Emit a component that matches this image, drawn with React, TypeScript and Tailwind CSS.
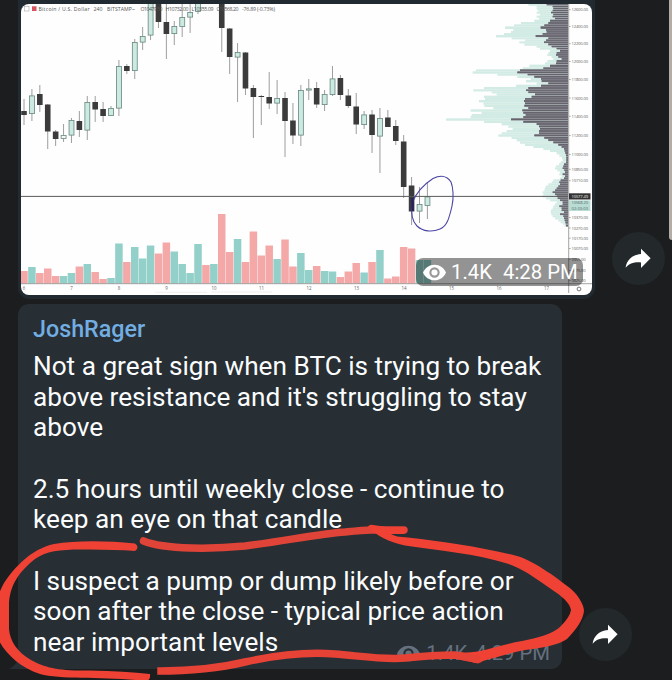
import React from "react";

type Candle = [number, number, number, number, "d" | "g" | "w"];

// high, body top, body bottom, low, kind (dark / green / hollow)
const candles: (Candle | null)[] = [
  [99, 111, 115, 125, "d"], [89, 95.5, 114, 121, "g"], [85, 94, 105, 112, "d"], [104, 104.5, 131.5, 149, "d"],
  [130, 131.5, 139, 146, "d"], [124, 135, 139, 142, "w"], [118, 120, 135.5, 143, "g"], [111, 121, 130, 137, "d"],
  [96, 102, 130.5, 140, "g"], [96, 102, 109.5, 122, "d"], [102, 109, 116, 122, "d"], [106, 108, 116, 116, "g"],
  [60, 66, 108.5, 116, "g"], [64, 66, 71, 74, "d"], [39, 42, 71, 79, "g"], [27, 36, 42.5, 50, "g"],
  [0, 0, 35.5, 40, "g"], [0, 0, 22, 28, "d"], [4, 22, 34, 59, "d"], [21, 26, 34, 45, "g"],
  [4, 17, 27, 37, "g"], [4, 12, 17.5, 33, "g"], [0, 0, 12, 14, "g"], null,
  null, [0, 0, 28, 52, "d"], [28, 28.5, 57, 74, "d"], [43, 52, 57.5, 102, "g"],
  [52, 52.5, 88.5, 95, "d"], [85, 88, 97, 138, "d"], [95, 96, 97, 125, "d"], [72, 97, 103.5, 109, "d"],
  [80, 98, 103.5, 114, "g"], [92, 98, 121, 157, "d"], [103, 120.5, 135.5, 144, "d"], [85, 90, 135.5, 146, "g"],
  [79, 88.5, 90.5, 100, "w"], [82, 88, 104.5, 108, "d"], [90, 94, 105, 111, "g"], [66, 78.5, 95, 96, "g"],
  [75, 78, 95, 100, "d"], [89, 95.5, 106, 108, "d"], [93, 106.5, 124.5, 134, "d"], [111, 114.5, 125, 129, "g"],
  [110, 114.5, 135, 153, "d"], [108, 118, 136.5, 173, "g"], [110, 117.5, 127, 127, "d"], [120, 126, 141, 145, "d"],
  [135, 141.5, 187, 198, "d"], [177, 185.5, 211.5, 225, "d"], [187, 204, 211.5, 223, "g"], [182, 196.5, 206, 219, "g"],
];

const volumes: [number, "r" | "g"][] = [
  [271, "r"], [267, "g"], [273, "r"], [268.5, "r"], [276, "r"], [276, "g"], [273, "g"], [266.5, "r"], [264, "g"],
  [272, "r"], [279, "r"], [278, "g"], [243.5, "g"], [262, "r"], [247, "g"], [258.5, "g"], [245.5, "g"], [253.5, "r"],
  [242.5, "r"], [251.5, "g"], [264, "g"], [273, "g"], [244, "g"], [265, "r"], [264, "g"], [214, "r"], [252, "r"],
  [239, "g"], [262, "r"], [231.5, "r"], [255.5, "r"], [245.5, "r"], [259, "g"], [239.5, "r"], [266.5, "r"],
  [253, "g"], [270, "g"], [266, "r"], [271, "g"], [271.5, "g"], [277, "r"], [271.5, "r"], [263, "r"], [272.5, "g"],
  [262, "r"], [250, "g"], [278.5, "r"], [276.5, "r"], [247, "r"], [248.5, "r"], [260, "g"], [260, "g"],
];

// y, outer left edge, inner left edge; in thirds of a pixel from (440, 0)
const profile: [number, number, number][] = [
  [15, 265, 320], [20, 290, 338], [26, 290, 340], [32, 295, 338], [38, 290, 333], [44, 300, 340], [50, 290, 338],
  [56, 297, 345], [62, 283, 330], [69, 243, 325], [76, 222, 313], [82, 195, 302], [90, 220, 318], [96, 213, 320],
  [102, 192, 308], [108, 168, 287], [115, 215, 325], [121, 255, 318], [127, 238, 312], [133, 253, 325],
  [140, 290, 335], [146, 300, 350], [152, 330, 360], [159, 325, 350], [165, 322, 348], [171, 335, 355],
  [177, 340, 365], [183, 322, 350], [190, 315, 348], [197, 268, 330], [205, 248, 310], [211, 108, 240],
  [217, 98, 232], [224, 172, 263], [230, 232, 283], [237, 272, 303], [243, 258, 305], [250, 290, 325],
  [257, 228, 303], [264, 132, 265], [271, 100, 258], [277, 155, 265], [283, 170, 285], [290, 132, 275],
  [297, 135, 255], [303, 117, 252], [310, 130, 255], [317, 133, 253], [324, 160, 265], [331, 92, 247],
  [338, 125, 250], [345, 95, 257], [351, 92, 250], [358, 18, 213], [365, 132, 250], [372, 185, 290],
  [379, 205, 297], [386, 218, 300], [393, 200, 297], [400, 185, 297], [406, 175, 283], [413, 215, 313],
  [420, 230, 325], [427, 240, 340], [434, 255, 355], [441, 280, 365], [447, 310, 372], [453, 330, 374],
  [459, 350, 376], [466, 358, 378], [473, 366, 379], [480, 368, 379], [487, 362, 378], [493, 357, 372],
  [499, 348, 370], [505, 345, 368], [511, 352, 373], [517, 360, 375], [523, 358, 368], [529, 365, 375],
  [535, 360, 372], [541, 340, 362], [547, 335, 358], [553, 325, 360], [559, 318, 355], [565, 315, 350],
  [571, 313, 345], [577, 308, 338], [583, 310, 345], [589, 307, 350], [595, 318, 353], [601, 330, 360],
  [607, 350, 368], [613, 345, 368], [619, 340, 358], [625, 338, 365], [631, 333, 365], [637, 332, 372],
  [643, 334, 360], [649, 338, 370], [655, 345, 372], [661, 355, 374], [667, 362, 376], [673, 370, 377], [677, 374, 378],
];

const prices: [number, string][] = [
  [9.7, "12600.00"], [26.5, "12400.00"], [43.7, "12200.00"], [61.5, "12000.00"], [79.5, "11800.00"],
  [98, "11600.00"], [116.3, "11400.00"], [135.5, "11200.00"], [154.5, "11000.00"], [169.3, "10850.00"],
  [180.7, "10710.00"], [217.5, "10370.00"], [228, "10270.00"], [238.2, "10170.00"], [248.5, "10070.00"],
  [259.3, "9955.00"], [270.5, "9875.00"], [280.5, "9825.00"],
];

const cx = (i: number) => 24 + i * 7.91;

function Chart() {
  return (
    <svg className="block h-[291px] w-[571px]" viewBox="21 4 571 291" fontFamily="'Open Sans', sans-serif">
      <rect x="21" y="4" width="571" height="291" fill="#fefefe" />
      <g>
        {profile.map(([y, a, b], i) => {
          const h = ((profile[i + 1]?.[0] ?? y + 6) - y) / 3;
          return (
            <g key={y}>
              <rect x={440 + a / 3} y={y / 3 - 1} width={(384 - a) / 3} height={h + 0.05} fill="#d2ebe4" />
              <rect x={440 + b / 3} y={y / 3 - 1} width={(384 - b) / 3} height={h + 0.05} fill="#918f98" />
              <rect x={440 + b / 3} y={y / 3 - 0.8} width={(384 - b) / 3} height={h - 0.7} fill="#65636c" />
            </g>
          );
        })}
      </g>
      {volumes.map(([t, c], i) => {
        const left = Math.max(21, cx(i) - 3.95 + 0.2);
        return (
          <rect key={i} x={left} y={t} width={cx(i) + 3.75 - left} height={283.5 - t} fill={c === "r" ? "#f4a9a8" : "#93d0c9"} />
        );
      })}
      {candles.map((c, i) => {
        if (!c) return null;
        const [hi, top, bot, lo, k] = c;
        return (
          <g key={i}>
            <path d={`M${cx(i)} ${hi}V${lo}`} stroke="#858585" strokeWidth=".8" />
            {k === "d" ? (
              <rect x={cx(i) - 2.8} y={top} width="5.6" height={bot - top} fill="#3b3b3b" />
            ) : (
              <rect x={cx(i) - 2.4} y={top + 0.4} width="4.9" height={bot - top - 0.8} fill={k === "g" ? "#cdeae2" : "#f5f8f7"} stroke="#66867f" strokeWidth=".8" />
            )}
          </g>
        );
      })}
      <path d="M21 196.4H568" stroke="#5a5a5a" strokeWidth="1" />
      <path d="M21 283.7H592" stroke="#8a8a8a" strokeWidth=".8" />
      <path d="M568.7 4V293" stroke="#8a8a8f" strokeWidth=".8" />
      <path
        d="M412 203C417 191 426 183 433 178.5C440 175 447 175.500 451 182C453 187 454 197 452 206C449 219 447 226 440 229C432 232.500 423 231.500 417 226C412 221 411 211 412 203"
        fill="none"
        stroke="#4b46a2"
        strokeWidth="1.1"
      />
      <path d="M412.5 198V211" stroke="#28215f" strokeWidth="2.200" />
      <g fontSize="4.1" fill="#626262">
        {prices.map(([y, label]) => (
          <g key={label}>
            <path d={`M569 ${y}h1.6`} stroke="#777" strokeWidth=".6" />
            <text x="571.5" y={y + 1.5} textLength={label.length > 7 ? 16.5 : 14}>{label}</text>
          </g>
        ))}
      </g>
      <rect x="569" y="200.3" width="21.500" height="10.7" fill="#b9ddd5" />
      <rect x="569" y="193.300" width="21.500" height="6.200" fill="#333" />
      <g fontSize="4.1">
        <text x="571.5" y="198" textLength="16.5" fill="#f2f2f2">10577.49</text>
        <text x="571.5" y="204.100" textLength="16.5" fill="#546b66">10568.20</text>
        <text x="571.5" y="209.800" textLength="16.5" fill="#546b66">02:33:00</text>
      </g>
      <g fontSize="4.4" fill="#666" textAnchor="middle">
        {[6, 7, 8, 9, 10, 11, 12, 13, 14, 15, 16, 17].map((d, i) => (
          <text key={d} x={24 + i * 47.5} y="290.3">{d}</text>
        ))}
      </g>
      <path d="M155 292.300H207M211 292H272" stroke="#e4e4e4" strokeWidth=".6" />
      <circle cx="579" cy="289" r="1.9" fill="none" stroke="#555" strokeWidth=".8" />
      <rect x="24.500" y="6.500" width="4.500" height="4.500" fill="none" stroke="#aaa" strokeWidth=".6" />
      <rect x="32" y="6.300" width="4.500" height="4.700" fill="#d65561" />
      <g fontSize="5.2" fill="#555">
        <text x="38.500" y="10.600" textLength="51">Bitcoin / U.S. Dollar</text>
        <text x="93.500" y="10.600" textLength="9">240</text>
        <text x="107" y="10.600" textLength="28">BITSTAMP~</text>
        <text x="140.500" y="10.600" textLength="22">O10479.50</text>
        <text x="165.500" y="10.600" textLength="23">H10732.00</text>
        <text x="191.500" y="10.600" textLength="22">L10355.09</text>
        <text x="216.500" y="10.600" textLength="22">C10568.20</text>
        <text x="242" y="10.600" textLength="33">-76.89 (-0.73%)</text>
      </g>
    </svg>
  );
}

function Eye({ className, pupil }: { className: string; pupil: string }) {
  return (
    <svg viewBox="0 0 24 17" className={className}>
      <path d="M12 0.300C6.500 .300 2 3.700 0 8.500C2 13.300 6.500 16.700 12 16.700S22 13.300 24 8.500C22 3.700 17.500 .300 12 .300Z" fill="currentColor" />
      <circle cx="12" cy="8.500" r="4.300" fill="none" stroke={pupil} strokeWidth="2.200" />
    </svg>
  );
}

function ForwardButton() {
  return (
    <button aria-label="Forward" className="flex size-[53px] shrink-0 items-center justify-center rounded-full bg-[#23282b] text-white">
      <svg viewBox="0 0 26 21" className="mr-[2px] h-[21px] w-[26px]">
        <path d="M16 .800L25.600 10.200L16 20V14.400C8.500 14 4.200 15.700 .600 19.800C1.700 12.500 6.500 7 16 6.100Z" fill="currentColor" />
      </svg>
    </button>
  );
}

function RedMarker() {
  return (
    <svg className="pointer-events-none absolute inset-0 h-[680px] w-[672px]" viewBox="0 0 672 680" fill="#ef4235">
      <path d="M135 543.500C105 540.500 75 540.500 54 544C31 549 14 568 4 583Q0 590 -3 600V636C2 650 18 667 40 674C62 680 105 676 145 681Q151 681 150 674Q125 671 90 670.500C60 671 45 668 31 660C17 652 10 641 9 629V606C9 585 20 571 35 559C47 550 65 549 90 549.500Q115 549.500 135 551Q140 547 135 543.500Z" />
      <path d="M143.500 541C165 550 215 549 245 546C285 541 318 534 345 532Q365 530 371 530H404" fill="none" stroke="#e04438" strokeWidth="7.500" strokeLinecap="round" strokeLinejoin="round" />
      <path d="M368 527Q369 524 373 525L387 527H404Q409 530 404 534H391Q395 537 408 537.500C445 542 482 547 517 556C535 561 561 581 571 589C580 597 584 606 584 611C583 620 576 630 567 639C559 645 542 648 525 650C510 653 494 658 483 661Q478 665 472 662L457 659L460 652C476 655 498 645 522 641C538 638 552 634 560 627Q570 617 571 610C570 603 562 596 551 589C535 578 523 569 507 563.500C477 554 437 550 405 545.500C388 542 376 535 368 527Z" />
      <path d="M161 671C190 671 216 669 245 662C281 654 310 652 335 654C360 656 385 660 405 658C424 656 442 655 455 655L476 659" fill="none" stroke="#e64236" strokeWidth="7.500" strokeLinecap="square" />
    </svg>
  );
}

export default function App() {
  return (
    <main className="relative flex h-[680px] w-[672px] flex-col overflow-hidden bg-[#1b1d1f] font-['Roboto',sans-serif]">
      <div className="flex items-end">
        <section className="relative ml-[18px] h-[299px] w-[577px] shrink-0 rounded-b-[11px] bg-[#202a30] px-[3px] pt-1">
          <div className="overflow-hidden rounded-[8px]">
            <Chart />
          </div>
          <div className="absolute top-[258px] left-[398px] flex h-[28px] w-[167px] items-center rounded-[7px] bg-black/42 text-[20.300px] text-white">
            <Eye className="ml-[7px] h-[17px] w-[23px]" pupil="#999" />
            <span className="ml-[5px] w-[52px]">1.4K</span>
            <span className="whitespace-nowrap">4:28 PM</span>
          </div>
        </section>
        <div className="mb-[14px] ml-[17px]">
          <ForwardButton />
        </div>
      </div>
      <div className="mt-[5px] flex items-end">
        <section className="relative ml-[18px] h-[365px] w-[544px] shrink-0 rounded-[11px] rounded-bl-none bg-[#272e34] px-[15px] pt-[9px]">
          <h2 className="text-[23.300px] leading-[32px] font-medium text-[#73aee2]">JoshRager</h2>
          <p className="mt-[6px] text-[26.200px] leading-[30.650px] whitespace-pre text-[#fafcfd]">
            {"Not a great sign when BTC is trying to break\nabove resistance and it's struggling to stay\nabove\n\n2.5 hours until weekly close - continue to\nkeep an eye on that candle\n\nI suspect a pump or dump likely before or\nsoon after the close - typical price action\nnear important levels"}
          </p>
          <svg className="absolute bottom-0 -left-[9px] h-[9px] w-[9px]" viewBox="0 0 9 9">
            <path d="M9 0V9H0Q6 6 9 0Z" fill="#272e34" />
          </svg>
          <div className="absolute right-[12px] bottom-[4px] flex h-[24px] items-center text-[20.300px] text-[#65717e]">
            <Eye className="h-[17px] w-[23px]" pupil="#272e34" />
            <span className="ml-[6px] w-[49px]">1.4K</span>
            <span className="whitespace-nowrap">4:29 PM</span>
          </div>
        </section>
        <div className="mb-[8px] ml-[17px]">
          <ForwardButton />
        </div>
      </div>
      <div className="absolute -top-2 right-0 h-[248px] w-[3px] rounded-bl-[3px] bg-[#b3aca7]" />
      <RedMarker />
    </main>
  );
}
